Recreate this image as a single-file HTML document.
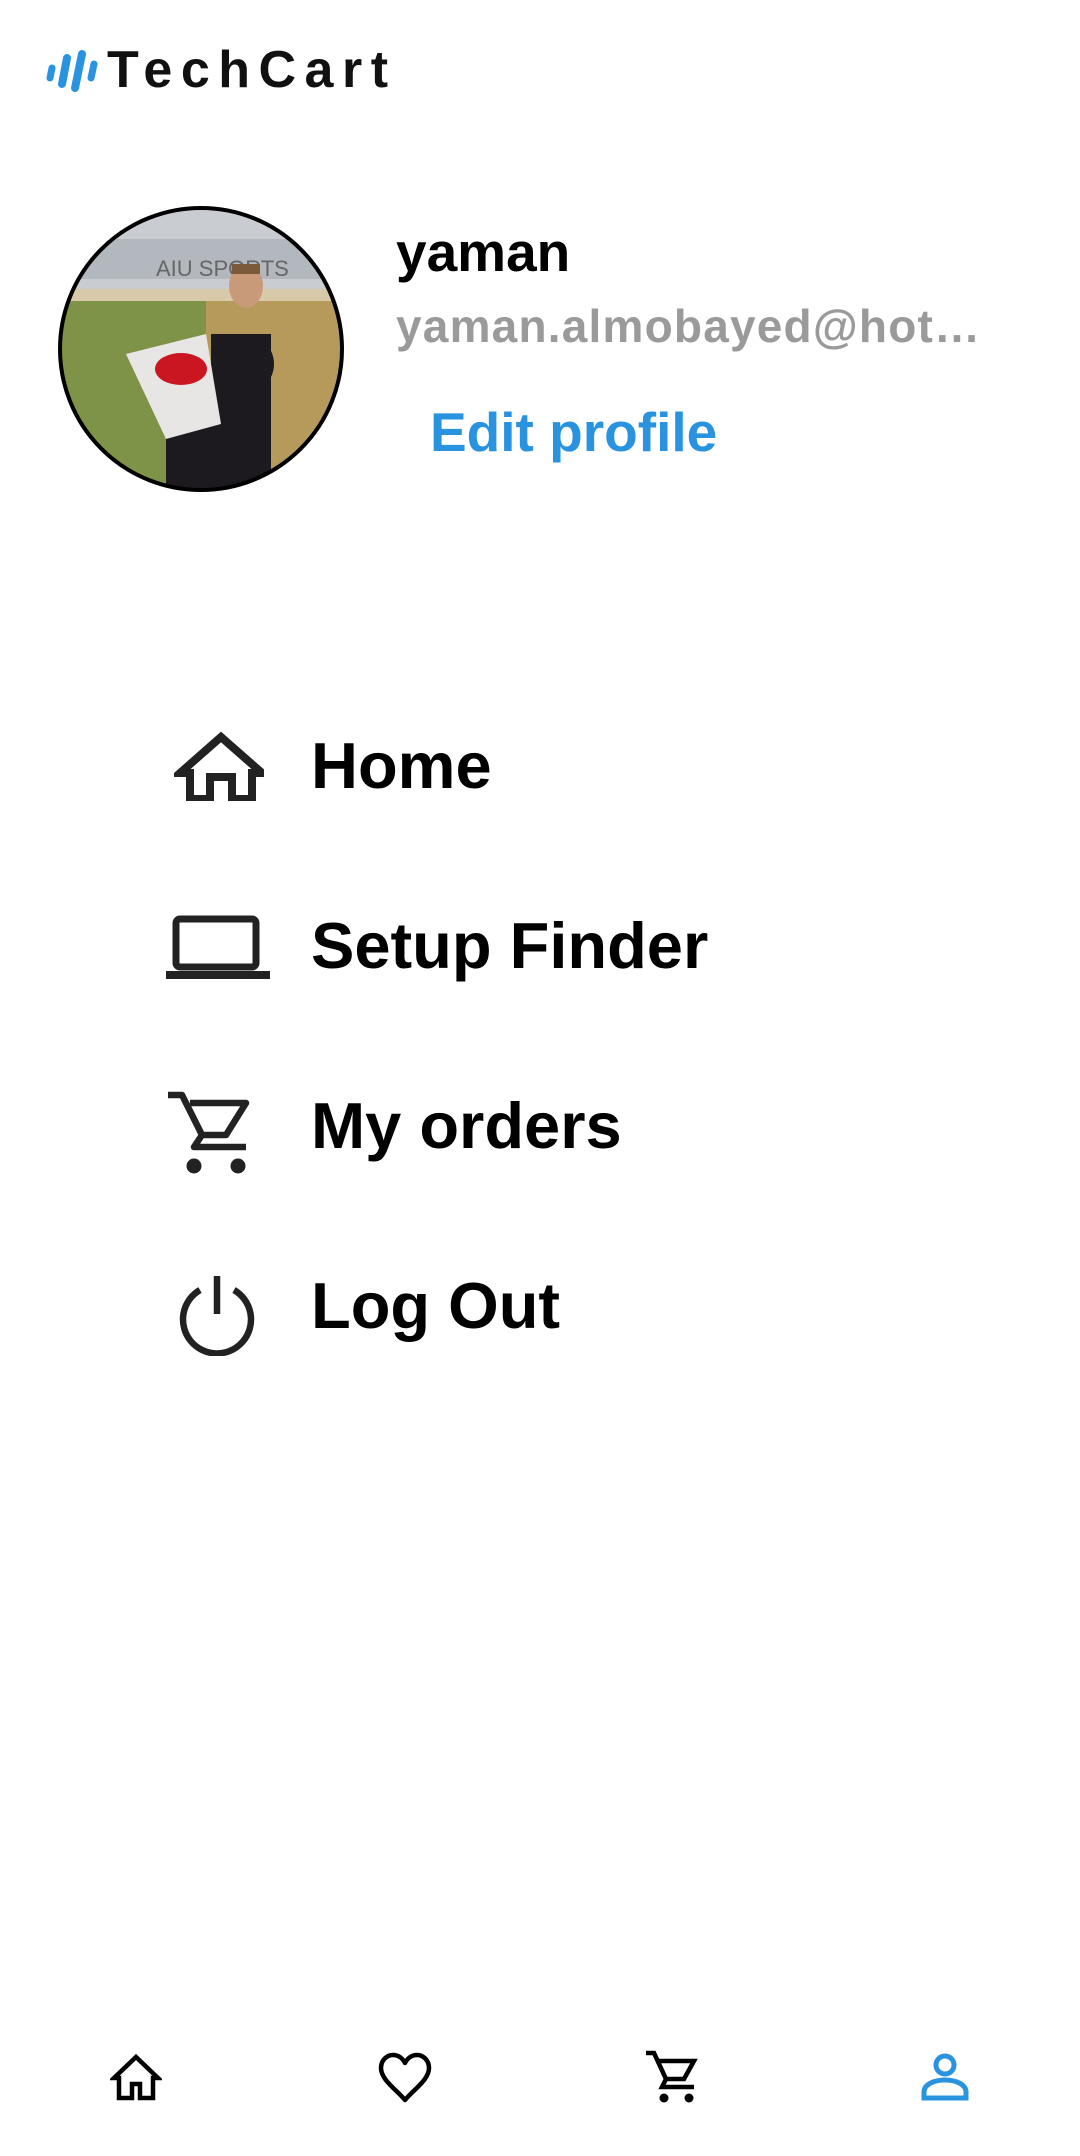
<!DOCTYPE html>
<html><head><meta charset="utf-8">
<style>
html,body{margin:0;padding:0;background:#fff;}
body{width:1080px;height:2156px;position:relative;overflow:hidden;font-family:"Liberation Sans",sans-serif;}
.abs{position:absolute;}
.logo{left:107px;top:42px;font-size:52px;font-weight:bold;letter-spacing:8.5px;color:#111;line-height:56px;}
.name{left:396px;top:222px;font-size:55px;font-weight:bold;color:#000;line-height:60px;}
.email{left:396px;top:300px;font-size:46px;font-weight:bold;color:#9a9a9a;line-height:52px;letter-spacing:1.2px;}
.edit{left:430px;top:400px;font-size:55px;font-weight:bold;color:#2a93e0;line-height:64px;}
.mi{left:311px;font-size:65px;font-weight:bold;color:#000;line-height:72px;}
</style></head><body>
<svg class="abs" style="left:46px;top:50px" width="52" height="42" viewBox="0 0 52 42">
<g stroke="#2a93e0" stroke-linecap="round" fill="none">
<line x1="6" y1="18" x2="4" y2="28" stroke-width="7"/>
<line x1="21" y1="8" x2="16" y2="34" stroke-width="8"/>
<line x1="36" y1="4" x2="29" y2="38" stroke-width="8"/>
<line x1="48" y1="14" x2="45" y2="28" stroke-width="7"/>
</g></svg>
<div class="abs logo">TechCart</div>

<svg class="abs" style="left:56px;top:204px" width="290" height="290" viewBox="0 0 290 290">
<defs><clipPath id="c"><circle cx="145" cy="145" r="141"/></clipPath></defs>
<g clip-path="url(#c)">
<rect width="290" height="290" fill="#8a9a55"/>
<rect width="290" height="85" fill="#c9cdd2"/>
<rect y="35" width="290" height="40" fill="#b3b8be"/>
<text x="100" y="72" font-size="22" font-family="Liberation Sans" fill="#666">AIU SPORTS</text>
<rect y="85" width="290" height="12" fill="#d8c9a8"/>
<rect x="150" y="97" width="140" height="193" fill="#b59a5c"/>
<rect x="0" y="97" width="150" height="193" fill="#7f9348"/>
<rect x="110" y="180" width="95" height="120" fill="#1c1a1e"/>
<circle cx="188" cy="160" r="30" fill="#1c1a1e"/>
<rect x="155" y="130" width="60" height="170" fill="#1c1a1e"/>
<ellipse cx="190" cy="82" rx="17" ry="22" fill="#c99a7a"/>
<rect x="176" y="60" width="28" height="10" fill="#7a5a3a"/>
<path d="M70 150 L150 130 L165 220 L110 235 Z" fill="#e8e6e4"/>
<ellipse cx="125" cy="165" rx="26" ry="16" fill="#c91620"/>
</g>
<circle cx="145" cy="145" r="141" fill="none" stroke="#000" stroke-width="4"/>
</svg>

<div class="abs name">yaman</div>
<div class="abs email">yaman.almobayed@hot…</div>
<div class="abs edit">Edit profile</div>

<svg class="abs" style="left:174px;top:731px" width="90" height="70" viewBox="0 0 90 70">
<path d="M6 42 L47 6 L88 42 L78 42 L78 68 L58 68 L58 46 L36 46 L36 68 L16 68 L16 42 Z" fill="none" stroke="#222" stroke-width="8" stroke-linejoin="miter"/>
</svg>
<div class="abs mi" style="top:730px">Home</div>

<svg class="abs" style="left:164px;top:913px" width="106" height="74" viewBox="0 0 106 74">
<rect x="12" y="6" width="80" height="48" rx="4" fill="none" stroke="#222" stroke-width="7"/>
<rect x="2" y="58" width="104" height="8" fill="#222"/>
</svg>
<div class="abs mi" style="top:910px">Setup Finder</div>

<svg class="abs" style="left:166px;top:1089px" width="94" height="94" viewBox="0 0 94 94">
<g fill="none" stroke="#222" stroke-width="6.5" stroke-linejoin="round">
<path d="M2 6 L16 6 L36 46 L60 46 L80 14 L24 14"/>
<path d="M36 46 L28 58 L80 58"/>
</g>
<circle cx="28" cy="77" r="7.5" fill="#222"/><circle cx="72" cy="77" r="7.5" fill="#222"/>
</svg>
<div class="abs mi" style="top:1090px">My orders</div>

<svg class="abs" style="left:176px;top:1274px" width="82" height="82" viewBox="0 0 82 82">
<g fill="none" stroke="#222" stroke-width="6.5">
<path d="M24 16 A34 34 0 1 0 58 16"/>
<line x1="41" y1="2" x2="41" y2="40"/>
</g></svg>
<div class="abs mi" style="top:1270px">Log Out</div>

<svg class="abs" style="left:110px;top:2052px" width="52" height="50" viewBox="0 0 52 50">
<path d="M4 26 L26 5 L48 26 L43 26 L43 46 L30 46 L30 32 L22 32 L22 46 L9 46 L9 26 Z" fill="none" stroke="#000" stroke-width="4.5"/>
</svg>
<svg class="abs" style="left:377px;top:2052px" width="56" height="52" viewBox="0 0 56 52">
<path d="M28 48 C20 38 4 28 4 16 C4 8 10 3 16 3 C22 3 26 7 28 11 C30 7 34 3 40 3 C46 3 52 8 52 16 C52 28 36 38 28 48 Z" fill="none" stroke="#000" stroke-width="4.5" stroke-linejoin="round"/>
</svg>
<svg class="abs" style="left:644px;top:2049px" width="56" height="56" viewBox="0 0 56 56">
<g fill="none" stroke="#000" stroke-width="4.5">
<path d="M2 4 L10 4 L22 30 L40 30 L50 12 L15 12"/>
<path d="M22 30 L18 38 L50 38"/>
</g>
<circle cx="20" cy="49" r="4.5" fill="#000"/><circle cx="45" cy="49" r="4.5" fill="#000"/>
</svg>
<svg class="abs" style="left:919px;top:2050px" width="52" height="52" viewBox="0 0 52 52">
<g fill="none" stroke="#2a93e0" stroke-width="5">
<circle cx="26" cy="15" r="9"/>
<path d="M5 48 L5 42 C5 34 16 30 26 30 C36 30 47 34 47 42 L47 48 Z"/>
</g></svg>
</body></html>
